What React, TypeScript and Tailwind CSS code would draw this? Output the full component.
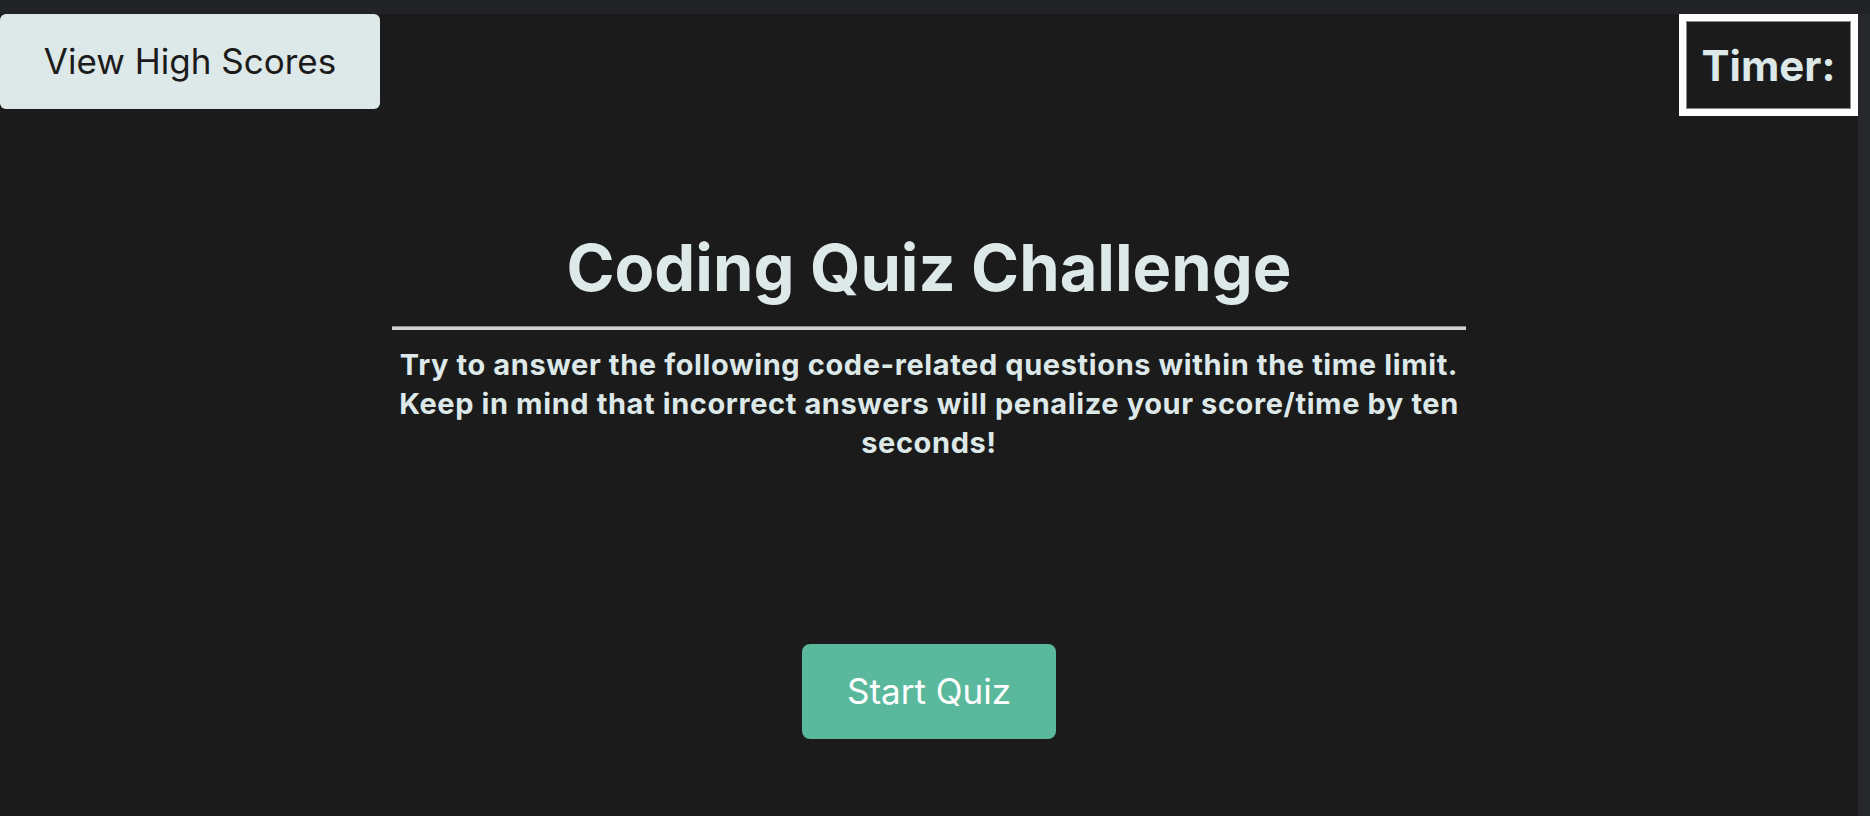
export default function App() {
  return (
    <div
      className="h-screen w-full bg-[#222326] flex flex-col overflow-hidden"
      style={{ fontFamily: "Inter, 'Noto Sans', sans-serif" }}
    >
      {/* top chrome strip */}
      <div className="h-[14px] shrink-0" />
      <div className="flex flex-1 min-h-0">
        <main className="flex-1 bg-[#1b1b1b] flex flex-col">
          {/* header row */}
          <header className="flex justify-between items-start">
            <button className="w-[380px] h-[95px] bg-[#dde8e8] text-[#1b1b1b] text-[35px] rounded-md">
              View High Scores
            </button>
            <div className="w-[179px] h-[102px] border-[7px] border-white">
              <div className="h-full w-full border border-[#8a8a8a] flex items-center justify-center">
                <span className="text-[#dde8e8] text-[42px] font-bold">Timer:</span>
              </div>
            </div>
          </header>

          {/* intro */}
          <section className="w-[1074px] mx-auto mt-[112px] flex flex-col items-center text-[#dde8e8]">
            <h1 className="text-[65px] leading-[80px] font-bold">Coding Quiz Challenge</h1>
            <div className="w-full h-[4px] mt-[18px] border-t border-[#8c8c8c] bg-[#d2d2d2]" />
            <p className="mt-[15px] text-[29px] leading-[39px] font-bold tracking-[0.6px] text-center">
              Try to answer the following code-related questions within the time limit. Keep in mind
              that incorrect answers will penalize your score/time by ten seconds!
            </p>
            <button className="mt-[182px] w-[254px] h-[95px] bg-[#5ab99c] text-white text-[35px] rounded-lg">
              Start Quiz
            </button>
          </section>
        </main>
        {/* scrollbar strip */}
        <div className="w-[12px] shrink-0 bg-[#27282c]" />
      </div>
    </div>
  );
}
